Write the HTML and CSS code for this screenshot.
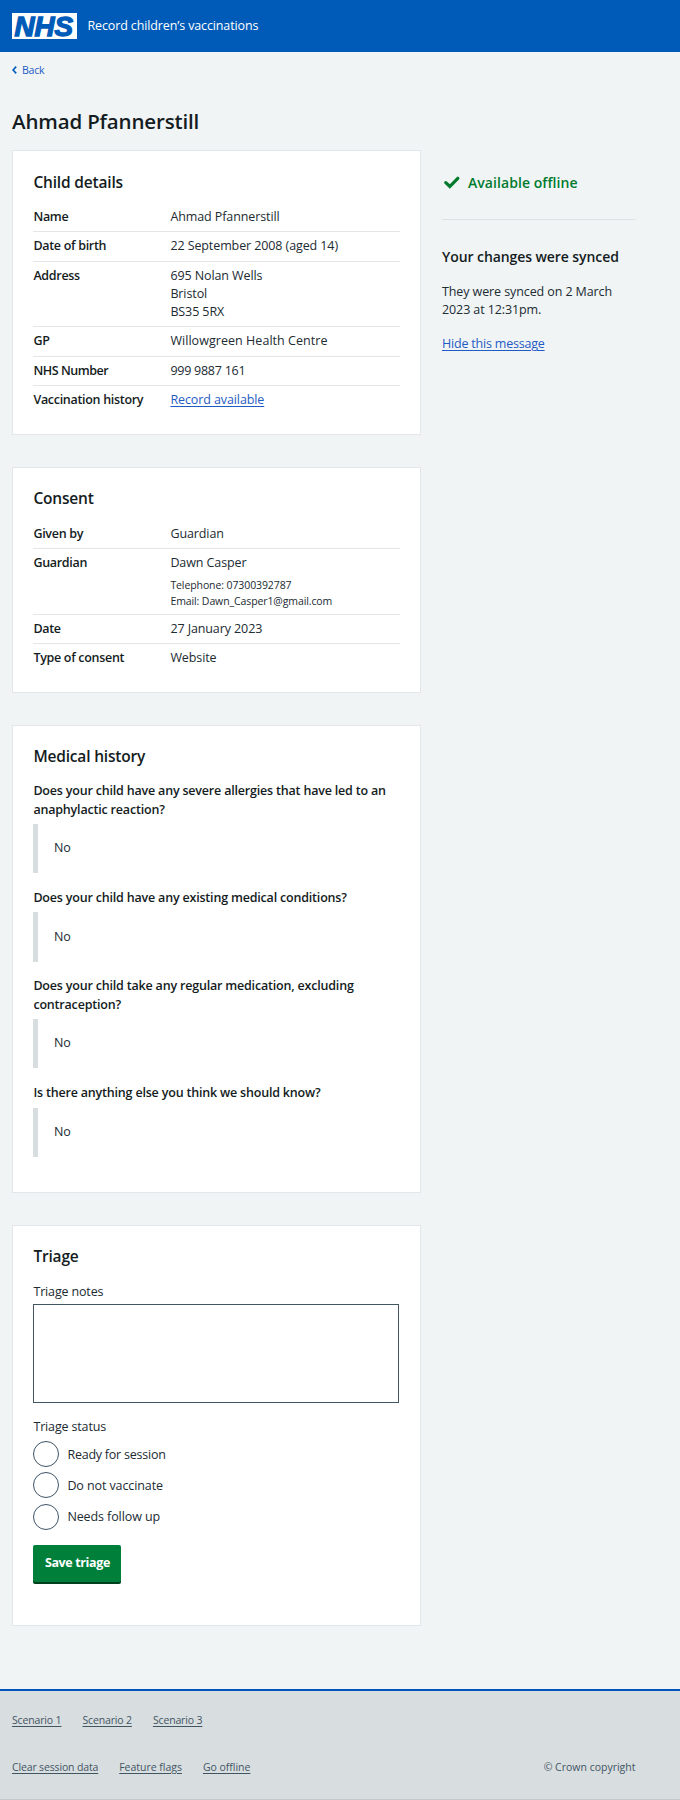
FILE: index.html
```
<!DOCTYPE html>
<html lang="en">
<head>
<meta charset="utf-8">
<title>Ahmad Pfannerstill – Record children’s vaccinations</title>
<link rel="stylesheet" href="styles.css">
</head>
<body>
<header class="header">
  <svg class="header-logo" viewBox="0 0 65 26" role="img" aria-label="NHS">
    <rect width="65" height="26" fill="#fff"/>
    <text class="logo-text" x="2.4" y="22.7" textLength="58.6" lengthAdjust="spacingAndGlyphs">NHS</text>
  </svg>
  <span class="header-name">Record children’s vaccinations</span>
</header>
<div class="wrap">
  <a class="back" href="#"><svg width="5" height="8" viewBox="0 0 5 8"><path d="M4.2 .6 1.1 4l3.1 3.4" fill="none" stroke="#005eb8" stroke-width="1.6"/></svg><span>Back</span></a>
  <h1 class="page-title">Ahmad Pfannerstill</h1>
  <div class="columns">
    <main class="main">
      <section class="card card-details">
        <h2 class="card-title">Child details</h2>
        <dl class="list">
          <div class="row"><dt>Name</dt><dd>Ahmad Pfannerstill</dd></div>
          <div class="row"><dt>Date of birth</dt><dd>22 September 2008 (aged 14)</dd></div>
          <div class="row"><dt>Address</dt><dd>695 Nolan Wells<br>Bristol<br>BS35 5RX</dd></div>
          <div class="row"><dt>GP</dt><dd class="wide">Willowgreen Health Centre</dd></div>
          <div class="row"><dt class="narrow">NHS Number</dt><dd class="narrow">999 9887 161</dd></div>
          <div class="row"><dt>Vaccination history</dt><dd><a href="#">Record available</a></dd></div>
        </dl>
      </section>
      <section class="card card-consent">
        <h2 class="card-title">Consent</h2>
        <dl class="list">
          <div class="row"><dt>Given by</dt><dd>Guardian</dd></div>
          <div class="row"><dt>Guardian</dt><dd>Dawn Casper<p class="contact">Telephone: 07300392787<br>Email: Dawn_Casper1@gmail.com</p></dd></div>
          <div class="row"><dt>Date</dt><dd>27 January 2023</dd></div>
          <div class="row"><dt>Type of consent</dt><dd>Website</dd></div>
        </dl>
      </section>
      <section class="card card-medical">
        <h2 class="card-title">Medical history</h2>
        <h3 class="question">Does your child have any severe allergies that have led to an<br>anaphylactic reaction?</h3>
        <p class="answer">No</p>
        <h3 class="question">Does your child have any existing medical conditions?</h3>
        <p class="answer">No</p>
        <h3 class="question">Does your child take any regular medication, excluding<br>contraception?</h3>
        <p class="answer">No</p>
        <h3 class="question">Is there anything else you think we should know?</h3>
        <p class="answer">No</p>
      </section>
      <section class="card card-triage">
        <h2 class="card-title">Triage</h2>
        <label class="label" for="notes">Triage notes</label>
        <textarea class="notes" id="notes"></textarea>
        <div class="label label-status">Triage status</div>
        <div class="radios">
          <label class="radio"><input type="radio" name="status"><span>Ready for session</span></label>
          <label class="radio radio-wide"><input type="radio" name="status"><span>Do not vaccinate</span></label>
          <label class="radio radio-wide"><input type="radio" name="status"><span>Needs follow up</span></label>
        </div>
        <button class="button" type="button">Save triage</button>
      </section>
    </main>
    <aside class="side">
      <div class="offline"><svg width="16" height="13" viewBox="0 0 16 13"><path d="M1.8 6.6 5.8 10.5 13.8 2.3" fill="none" stroke="#007b2e" stroke-width="3.2" stroke-linecap="round"/></svg><span>Available offline</span></div>
      <h2 class="side-title">Your changes were synced</h2>
      <p class="side-text">They were synced on 2 March<br>2023 at 12:31pm.</p>
      <a class="side-link" href="#">Hide this message</a>
    </aside>
  </div>
</div>
<footer class="footer">
  <nav class="links"><a href="#">Scenario 1</a><a href="#">Scenario 2</a><a href="#">Scenario 3</a></nav>
  <div class="footer-end">
    <nav class="links"><a href="#">Clear session data</a><a class="wide" href="#">Feature flags</a><a class="wide" href="#">Go offline</a></nav>
    <span class="copyright">© Crown copyright</span>
  </div>
</footer>
</body>
</html>
```
FILE: styles.css
```
* { box-sizing: border-box; }
body, h1, h2, h3, p, dl, dd { margin: 0; }
body {
  width: 680px;
  height: 1800px;
  display: flex;
  flex-direction: column;
  background: #f0f4f5;
  color: #212b32;
  font: 12.5px/18.25px "Open Sans", "Noto Sans", sans-serif;
  letter-spacing: -0.1px;
}
h1, h2, h3, dt { color: #141c22; font-weight: 600; }
a { color: #1f5bc4; text-underline-offset: 1.5px; text-decoration-thickness: 1px; }

.header {
  height: 51.5px;
  flex: none;
  display: flex;
  align-items: center;
  gap: 10.5px;
  padding: 0 12px;
  background: #005bb8;
}
.header-logo { width: 65px; height: 26px; overflow: visible; }
.logo-text {
  font: italic 700 27px "Liberation Sans", sans-serif;
  letter-spacing: 0;
  fill: #005bb8;
  stroke: #005bb8;
  stroke-width: 1.3px;
}
.header-name { color: #fff; font-weight: 500; letter-spacing: -0.13px; }

.wrap { height: 1637.5px; flex: none; padding: 10.5px 12px 0; }
.back {
  display: flex;
  align-items: center;
  gap: 5px;
  width: max-content;
  height: 16px;
  font-size: 10.6px;
  letter-spacing: -0.3px;
  text-decoration: none;
}
.page-title { margin-top: 29px; font-size: 20.5px; line-height: 28px; letter-spacing: -0.16px; }

.columns { display: flex; gap: 21px; margin-top: 15px; }
.main { width: 409px; display: flex; flex-direction: column; gap: 31.7px; }
.card { padding: 19.5px 20.4px 0; border: 1px solid #e1e7ea; background: #fff; }
.card-details { height: 285.2px; }
.card-consent { height: 226.3px; }
.card-medical { height: 468.3px; }
.card-triage { height: 401px; }
.card-title { font-size: 15.5px; line-height: 22px; letter-spacing: -0.18px; }

.list { margin-top: 10.8px; }
.row {
  display: grid;
  grid-template-columns: 137px 1fr;
  padding: 5px 0 4.95px;
  border-bottom: 1px solid #e3e7e9;
}
.row:last-child { border-bottom: 0; }
.row dt { letter-spacing: -0.3px; }
.row dt.narrow { letter-spacing: -0.45px; }
.row dd.narrow { letter-spacing: -0.25px; }
.row dd.wide { letter-spacing: 0.05px; }
.contact { margin-top: 5.3px; font-size: 10.5px; line-height: 15.6px; letter-spacing: -0.1px; }

.question { margin-top: 15.8px; font-size: 12.5px; letter-spacing: -0.19px; white-space: nowrap; }
.card-title + .question { margin-top: 15px; }
.answer { height: 49.2px; margin-top: 5.2px; padding: 15.3px 0 0 15.6px; border-left: 5px solid #d8dde0; }

.label { display: block; margin-top: 15.2px; letter-spacing: -0.15px; }
.notes {
  display: block;
  width: 366px;
  height: 99px;
  margin-top: 2.9px;
  border: 1px solid #425563;
  border-radius: 0;
  background: #fff;
  resize: none;
}
.label-status { margin-top: 15.2px; }
.radios { display: flex; flex-direction: column; gap: 5px; margin-top: 5px; }
.radio { display: flex; align-items: center; gap: 8px; height: 26.2px; letter-spacing: -0.23px; }
.radio-wide { letter-spacing: -0.1px; }
.radio span { padding-top: 2px; }
.radio input {
  appearance: none;
  width: 26px;
  height: 26px;
  margin: 0;
  border: 1.3px solid #3d5468;
  border-radius: 50%;
  background: #fff;
}
.button {
  display: block;
  width: 88px;
  height: 37px;
  margin-top: 15.7px;
  padding: 0 0 1px;
  border: 0;
  border-radius: 2px;
  background: #007f3b;
  box-shadow: 0 2px 0 #00401e;
  color: #fff;
  font: inherit;
  font-weight: 700;
  letter-spacing: -0.37px;
}

.side { width: 193.5px; padding-top: 23px; }
.offline {
  display: flex;
  align-items: center;
  gap: 8px;
  height: 47px;
  padding: 0 0 26.5px 2px;
  border-bottom: 1px solid #dde2e5;
  color: #007b2e;
  font-size: 14px;
  font-weight: 600;
  letter-spacing: 0.06px;
}
.side-title { margin-top: 27px; font-size: 14px; line-height: 20px; letter-spacing: -0.08px; }
.side-text { margin-top: 15.8px; }
.side-link { display: inline-block; margin-top: 15.8px; letter-spacing: -0.2px; }

.footer {
  flex: 1;
  padding: 20.6px 44.5px 0 12px;
  border-top: 2px solid #0053bd;
  border-bottom: 1px solid #c3cacf;
  background: #d8dde0;
  color: #425563;
  font-size: 10.5px;
  line-height: 16px;
}
.links { display: flex; gap: 21px; letter-spacing: -0.15px; }
.links a { color: inherit; }
.links .wide { letter-spacing: -0.02px; }
.footer-end { display: flex; justify-content: space-between; margin-top: 31px; }
.copyright { letter-spacing: 0; }
```
